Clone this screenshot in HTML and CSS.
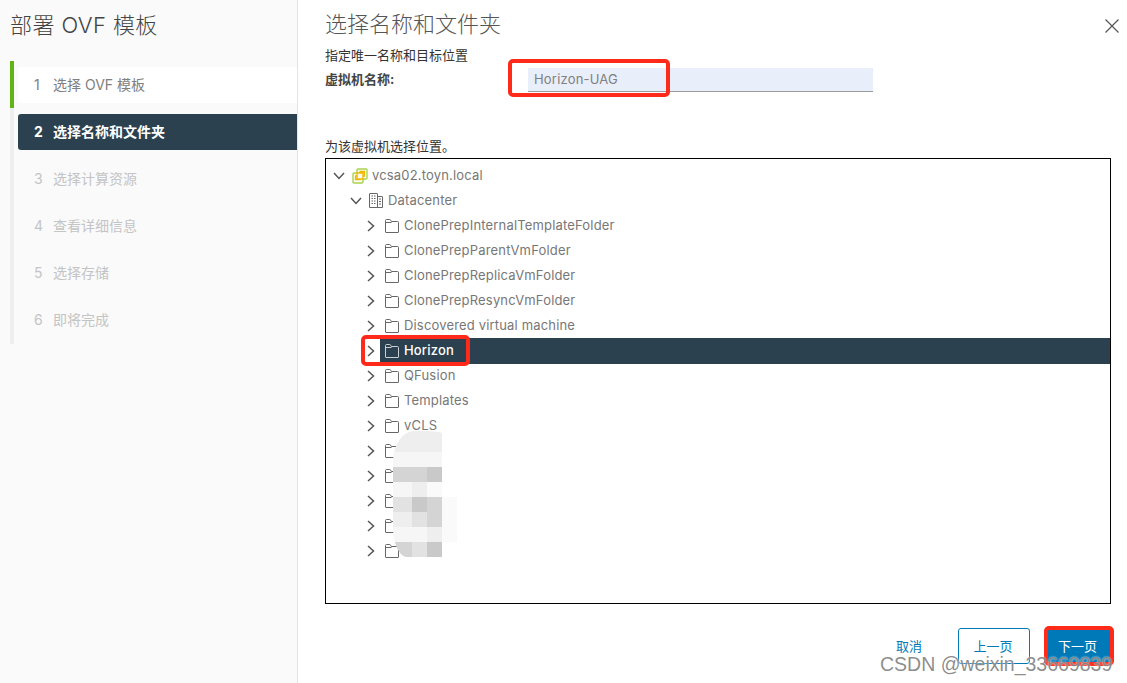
FILE: index.html
```html
<!DOCTYPE html>
<html lang="zh">
<head>
<meta charset="utf-8">
<title>部署 OVF 模板</title>
<link rel="stylesheet" href="styles.css">
</head>
<body>
<svg class="defs" width="0" height="0">
  <symbol id="folder" viewBox="0 0 14 14"><path d="M.5 13V1.500q0-1 1-1h3.200q.6 0 .9.600l.7 1.400h6.200q1 0 1 1V13q0 .5-.5.500H1q-.5 0-.5-.5zM.5 3.500h6" fill="none" stroke="currentColor"/></symbol>
  <symbol id="right" viewBox="0 0 10 12"><path d="M2 1l5.500 5L2 11" fill="none" stroke="currentColor" stroke-width="1.500"/></symbol>
  <symbol id="down" viewBox="0 0 12 10"><path d="M1 2l5 5.500L11 2" fill="none" stroke="currentColor" stroke-width="1.500"/></symbol>
</svg>
<div class="dialog">
  <aside class="sidebar">
    <h1 class="side-title">部署 OVF 模板</h1>
    <ol class="steps">
      <li class="step done"><span class="num">1</span>选择 OVF 模板</li>
      <li class="step active"><span class="num">2</span>选择名称和文件夹</li>
      <li class="step"><span class="num">3</span>选择计算资源</li>
      <li class="step"><span class="num">4</span>查看详细信息</li>
      <li class="step"><span class="num">5</span>选择存储</li>
      <li class="step"><span class="num">6</span>即将完成</li>
    </ol>
  </aside>
  <main class="main">
    <h2 class="main-title">选择名称和文件夹</h2>
    <button class="close" aria-label="关闭"><svg width="14" height="14" viewBox="0 0 14 14"><path d="M.5.500l13 13M13.500.500l-13 13" stroke="#555" stroke-width="1.200" fill="none"/></svg></button>
    <p class="hint">指定唯一名称和目标位置</p>
    <div class="name-row">
      <label class="name-label">虚拟机名称:</label>
      <div class="name-input">Horizon-UAG</div>
    </div>
    <p class="loc">为该虚拟机选择位置。</p>
    <div class="tree">
      <div class="row lv0"><svg class="chev"><use href="#down"/></svg>
        <svg class="ico" width="16" height="16" viewBox="0 0 16 16"><path d="M5 5V2q0-1 1-1h8q1 0 1 1v8q0 1-1 1h-3v3q0 1-1 1H2q-1 0-1-1V6q0-1 1-1z" fill="#fbfdf2" stroke="#a9d350" stroke-width="1.400"/><path d="M5 5h6v6H5zM5 8H3.500v3.500H8V11M8 5V3.500h4.500V8H11" fill="none" stroke="#f2b800" stroke-width="1.300"/></svg>
        <span>vcsa02.toyn.local</span></div>
      <div class="row lv1"><svg class="chev"><use href="#down"/></svg>
        <svg class="ico" width="14" height="15" viewBox="0 0 14 15"><path d="M.5 14.500V1q0-.5.5-.5h7q.5 0 .5.500v13.500zM8.500 3.500H13q.5 0 .5.500v10.500h-5z" fill="none" stroke="#666"/><path d="M2.500 3h1.500M5 3h1.500M2.500 5.500h1.500M5 5.500h1.500M2.500 8h1.500M5 8h1.500M2.500 10.500h1.500M5 10.500h1.500M10 6h2M10 8.500h2M10 11h2" stroke="#666"/></svg>
        <span>Datacenter</span></div>
      <div class="row lv2"><svg class="chev-r"><use href="#right"/></svg><svg class="folder"><use href="#folder"/></svg><span>ClonePrepInternalTemplateFolder</span></div>
      <div class="row lv2"><svg class="chev-r"><use href="#right"/></svg><svg class="folder"><use href="#folder"/></svg><span>ClonePrepParentVmFolder</span></div>
      <div class="row lv2"><svg class="chev-r"><use href="#right"/></svg><svg class="folder"><use href="#folder"/></svg><span>ClonePrepReplicaVmFolder</span></div>
      <div class="row lv2"><svg class="chev-r"><use href="#right"/></svg><svg class="folder"><use href="#folder"/></svg><span>ClonePrepResyncVmFolder</span></div>
      <div class="row lv2"><svg class="chev-r"><use href="#right"/></svg><svg class="folder"><use href="#folder"/></svg><span>Discovered virtual machine</span></div>
      <div class="row lv2 selected"><svg class="chev-r"><use href="#right"/></svg><div class="sel-bar"><svg class="folder"><use href="#folder"/></svg><span>Horizon</span></div></div>
      <div class="row lv2"><svg class="chev-r"><use href="#right"/></svg><svg class="folder"><use href="#folder"/></svg><span>QFusion</span></div>
      <div class="row lv2"><svg class="chev-r"><use href="#right"/></svg><svg class="folder"><use href="#folder"/></svg><span>Templates</span></div>
      <div class="row lv2"><svg class="chev-r"><use href="#right"/></svg><svg class="folder"><use href="#folder"/></svg><span>vCLS</span></div>
      <div class="row lv2"><svg class="chev-r"><use href="#right"/></svg><svg class="folder"><use href="#folder"/></svg></div>
      <div class="row lv2"><svg class="chev-r"><use href="#right"/></svg><svg class="folder"><use href="#folder"/></svg></div>
      <div class="row lv2"><svg class="chev-r"><use href="#right"/></svg><svg class="folder"><use href="#folder"/></svg></div>
      <div class="row lv2"><svg class="chev-r"><use href="#right"/></svg><svg class="folder"><use href="#folder"/></svg></div>
      <div class="row lv2"><svg class="chev-r"><use href="#right"/></svg><svg class="folder"><use href="#folder"/></svg></div>
    </div>
    <footer class="actions">
      <button class="btn link">取消</button>
      <button class="btn outline">上一页</button>
      <button class="btn primary">下一页</button>
    </footer>
  </main>
</div>
<div class="mosaic">
  <i class="m1"></i><i class="m1"></i><i class="m1"></i><i class="m0"></i>
  <i class="m2"></i><i class="m2"></i><i class="m2"></i><i class="m0"></i>
  <i class="m5"></i><i class="m5"></i><i class="m6"></i><i class="m0"></i>
  <i class="m2"></i><i class="m1"></i><i class="m3"></i><i class="m0"></i>
  <i class="m4"></i><i class="m6"></i><i class="m5"></i><i class="m3"></i>
  <i class="m1"></i><i class="m4"></i><i class="m5"></i><i class="m3"></i>
  <i class="m2"></i><i class="m2"></i><i class="m1"></i><i class="m3"></i>
  <i class="m5"></i><i class="m4"></i><i class="m6"></i><i class="m0"></i>
</div>
<div class="mark mark-input"></div>
<div class="mark mark-folder"></div>
<div class="mark mark-next"></div>
<div class="watermark">CSDN @weixin_33669839</div>
</body>
</html>
```
FILE: styles.css
```css
* { box-sizing: border-box; }
html, body { margin: 0; height: 100%; }
body {
  position: relative;
  width: 1127px;
  height: 683px;
  overflow: hidden;
  background: #fff;
  color: #565656;
  font-family: Inter, "Noto Sans CJK SC", sans-serif;
  font-size: 13px;
}
.defs { position: absolute; }
.dialog { display: flex; height: 683px; }

.sidebar {
  width: 298px;
  flex: none;
  background: #fafafa;
  border-right: 1px solid #e4e4e4;
  padding: 10px 0 0 10px;
}
.side-title {
  margin: 0 0 27px;
  height: 24px;
  line-height: 30px;
  font-size: 22px;
  font-weight: 300;
  letter-spacing: .4px;
  color: #444;
}
.steps {
  list-style: none;
  margin: 0;
  padding: 6px 0 0 4px;
  height: 283px;
  border-left: 4px solid #eee;
  position: relative;
}
.steps::before {
  content: "";
  position: absolute;
  left: -4px;
  top: 0;
  width: 4px;
  height: 47px;
  background: #60b515;
}
.step {
  display: flex;
  align-items: center;
  height: 36px;
  margin-bottom: 11px;
  padding: 0 0 2px 16px;
  font-size: 14px;
  color: #c4c4c4;
  border-radius: 3px 0 0 3px;
}
.num { width: 19px; flex: none; }
.step.done { background: #fff; color: #808080; }
.step.active { background: #2b4150; color: #fff; font-weight: 700; }

.main { flex: 1; position: relative; padding: 0 16px 0 27px; }
.main-title {
  margin: 0;
  padding-top: 10px;
  height: 46px;
  line-height: 28px;
  font-size: 22px;
  font-weight: 300;
  color: #555;
}
.close {
  position: absolute;
  left: 807px;
  top: 19px;
  padding: 0;
  border: 0;
  background: none;
  line-height: 0;
}
.hint { margin: 0; height: 20px; line-height: 18px; color: #333; font-size: 13px; }
.name-row { display: flex; align-items: flex-start; height: 27px; }
.name-label { width: 203px; font-weight: 700; color: #444; line-height: 26px; }
.name-input {
  width: 345px;
  height: 24px;
  margin-top: 2px;
  padding-left: 6px;
  line-height: 22px;
  letter-spacing: .2px;
  background: #e8eefa;
  border-bottom: 1px solid #9a9a9a;
  color: #808080;
}
.loc { margin: 43px 0 0; height: 22px; line-height: 20px; color: #333; }

.tree {
  width: 786px;
  height: 446px;
  padding-top: 4px;
  border: 1px solid #000;
}
.row { display: flex; align-items: center; height: 25px; color: #777; white-space: nowrap; letter-spacing: .17px; }
.row span { margin-top: -2px; }
.chev { width: 12px; height: 10px; color: #555; flex: none; }
.chev-r { width: 10px; height: 12px; color: #555; flex: none; margin-right: 9px; }
.lv0 { padding-left: 7px; }
.lv0 .ico { margin: 0 4px 0 7px; }
.lv1 { padding-left: 24px; }
.lv1 .ico { margin: 0 5px 0 7px; }
.lv2 { padding-left: 40px; }
.folder { width: 14px; height: 14px; color: #666; flex: none; margin-right: 5px; }
.selected { position: relative; color: #fff; font-weight: 500; }
.sel-bar {
  display: flex;
  align-items: center;
  flex: 1;
  height: 26px;
  margin-left: -5px;
  padding-left: 5px;
  background: #2b4150;
}
.sel-bar .folder { color: #c8d0d6; }

.actions { display: flex; align-items: center; height: 36px; margin: 24px -2px 0 0; justify-content: flex-end; }
.btn {
  height: 36px;
  font: inherit;
  font-size: 13px;
  border-radius: 3px;
  padding: 0 0 2px;
}
.link { width: 26px; margin-right: 36px; background: none; border: 0; color: #0079b8; }
.outline { width: 72px; margin-right: 15px; padding-right: 2px; background: #fff; border: 1px solid #0079b8; color: #0079b8; }
.primary { width: 68px; padding-right: 3px; background: #0079b8; border: 0; color: #fff; }

.mosaic {
  position: absolute;
  left: 393px;
  top: 431px;
  display: grid;
  grid-template-columns: 19px 15px 15px 15px;
  grid-template-rows: 21px repeat(7, 15px);
  overflow: hidden;
  border-radius: 22px 30px 0 14px / 30px 12px 0 30px;
}
.mosaic i { display: block; }
.m0 { background: #fff; }
.m1 { background: #eeeeee; }
.m2 { background: #f6f6f6; }
.m3 { background: #fafafa; }
.m4 { background: #e2e2e2; }
.m5 { background: #d4d4d4; }
.m6 { background: #c9c9c9; }

.mark {
  position: absolute;
  border: 4px solid #ff2a1a;
  border-radius: 5px;
}
.mark-input { left: 508px; top: 59px; width: 162px; height: 38px; }
.mark-folder { left: 361px; top: 335px; width: 109px; height: 31px; }
.mark-next { left: 1044px; top: 626px; width: 70px; height: 40px; }

.watermark {
  position: absolute;
  left: 880px;
  top: 653px;
  font-family: "Liberation Sans", sans-serif;
  font-size: 19.5px;
  line-height: 22px;
  color: rgba(120,120,120,.85);
  text-shadow: 0 0 2px #fff;
  white-space: nowrap;
}
```
